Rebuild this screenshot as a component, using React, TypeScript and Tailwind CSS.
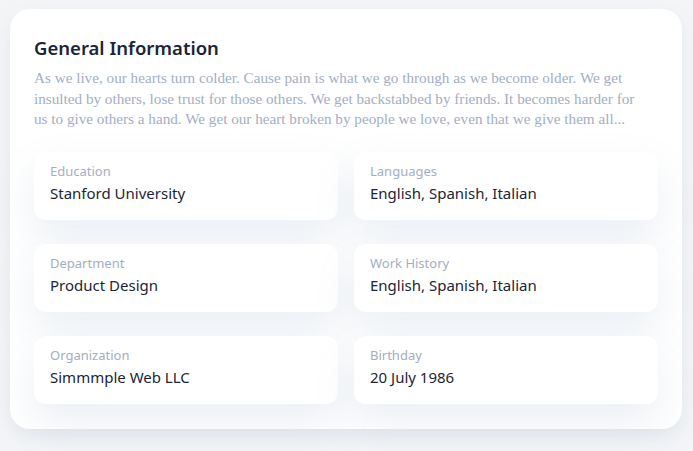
const items = [
  { label: "Education", value: "Stanford University" },
  { label: "Languages", value: "English, Spanish, Italian" },
  { label: "Department", value: "Product Design" },
  { label: "Work History", value: "English, Spanish, Italian" },
  { label: "Organization", value: "Simmmple Web LLC" },
  { label: "Birthday", value: "20 July 1986" },
];

export default function App() {
  return (
    <div className="min-h-screen bg-[#f4f5f7] px-[10px] pt-[9px] font-['Noto_Sans',sans-serif]">
      <div className="w-[672px] rounded-[20px] bg-white px-6 pb-[25px] pt-[25px] shadow-[0_8px_20px_rgba(112,144,176,0.12)]">
        <h2 className="text-[18.5px] font-semibold leading-[28px] text-[#1b2537]">
          General Information
        </h2>
        <p className="mt-[6px] w-[615px] font-['Liberation_Serif',serif] text-[15.2px] leading-[20.5px] text-[#a3aec4]">
          As we live, our hearts turn colder. Cause pain is what we go through as we become older. We get
          insulted by others, lose trust for those others. We get backstabbed by friends. It becomes harder for
          us to give others a hand. We get our heart broken by people we love, even that we give them all...
        </p>
        <div className="mt-[22px] grid grid-cols-2 gap-x-4 gap-y-6">
          {items.map((it) => (
            <div
              key={it.label}
              className="h-[68px] rounded-[12px] bg-white px-4 pt-[9px] shadow-[0_18px_40px_rgba(112,144,176,0.14)]"
            >
              <div className="text-[13px] leading-[20px] text-[#a3aec4]">{it.label}</div>
              <div className="mt-[1px] text-[15px] leading-[22px] text-[#1b2537]">{it.value}</div>
            </div>
          ))}
        </div>
      </div>
    </div>
  );
}
